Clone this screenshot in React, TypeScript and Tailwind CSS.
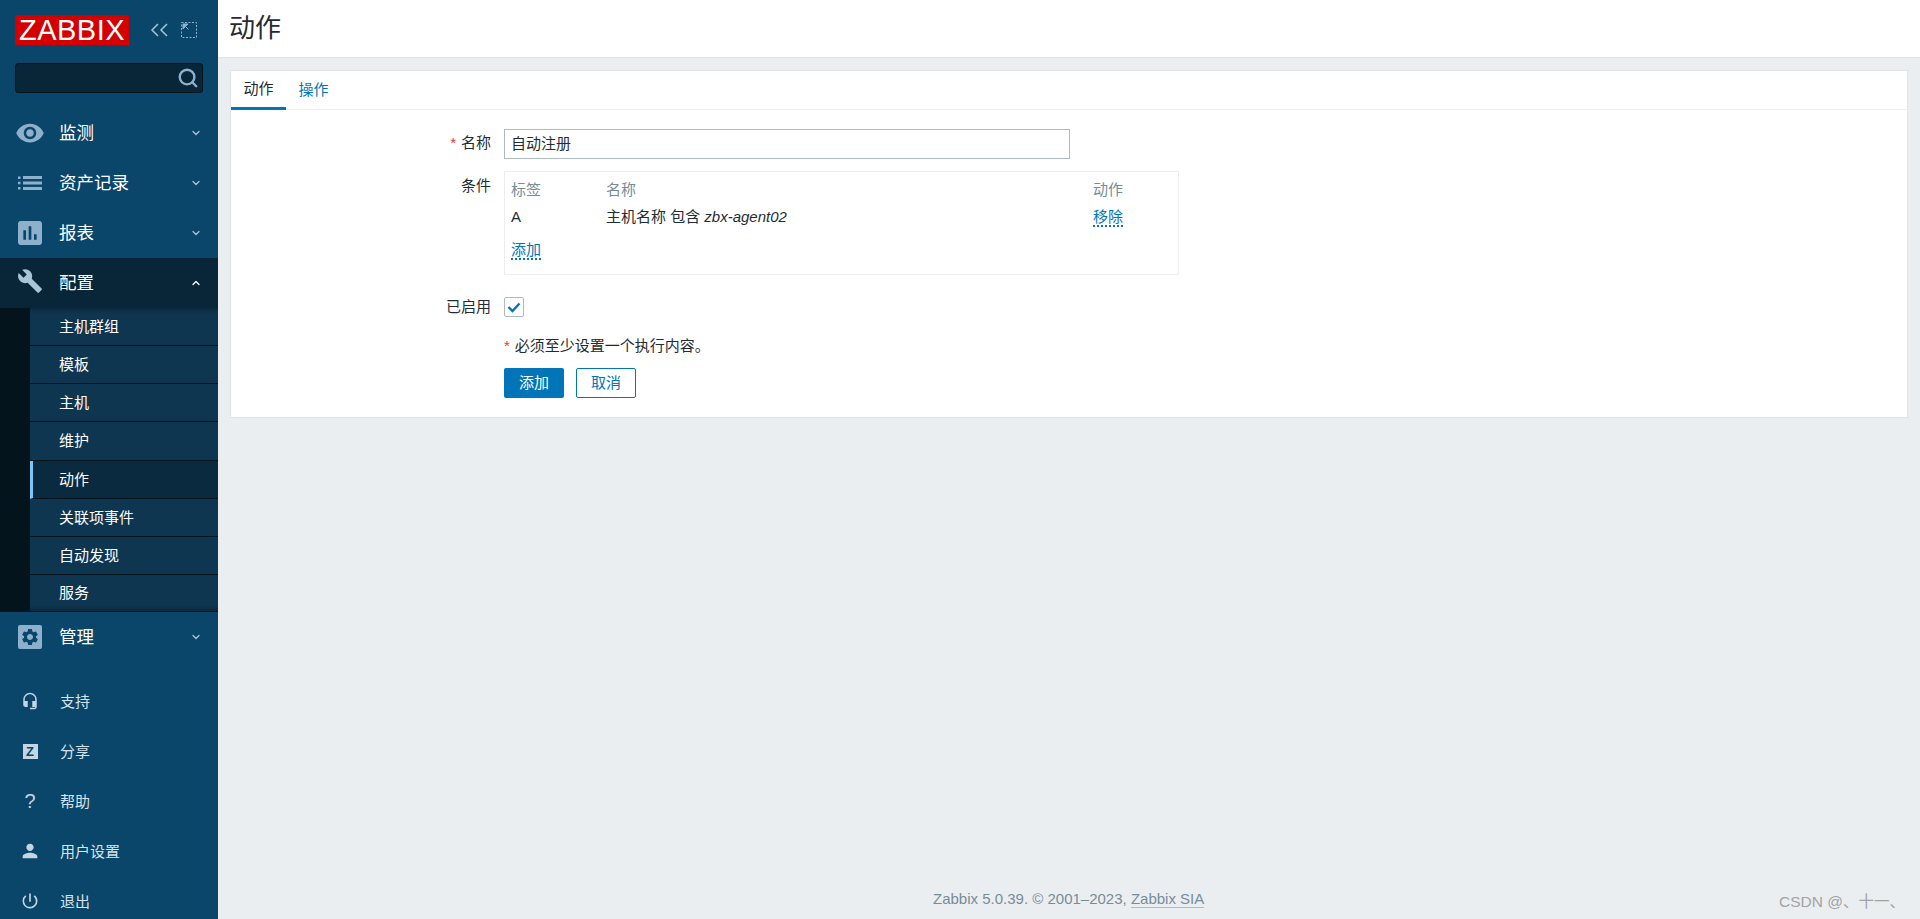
import React from "react";
import { MdVisibility, MdBuild, MdAssessment, MdPerson, MdPowerSettingsNew, MdSettings, MdHeadsetMic } from "react-icons/md";
import { ChevronDown, ChevronUp, Search } from "lucide-react";

const cjk = "font-['Liberation_Sans','Noto_Sans_CJK_SC',sans-serif]";

const ListIcon = () => (
  <svg width="24" height="14" viewBox="0 0 24 14" fill="#8db1cc">
    <rect x="0" y="0.5" width="2.5" height="2.5" />
    <rect x="0" y="5.75" width="2.5" height="2.5" />
    <rect x="0" y="11" width="2.5" height="2.5" />
    <rect x="5" y="0" width="19" height="3" />
    <rect x="5" y="5.5" width="19" height="3" />
    <rect x="5" y="11" width="19" height="3" />
  </svg>
);

const GearBox = () => (
  <span className="flex h-[24px] w-[24px] items-center justify-center rounded-[2px] bg-[#8db1cc]">
    <MdSettings size={20} color="#0a466a" />
  </span>
);

const CollapseIcon = () => (
  <svg width="18" height="14" viewBox="0 0 18 14" fill="none" stroke="#a9c4d8" strokeWidth="1.5">
    <path d="M8 1L2 7l6 6M17 1l-6 6 6 6" />
  </svg>
);

const KioskIcon = () => (
  <svg width="16" height="16" viewBox="0 0 16 16" fill="none" stroke="#8db1cc">
    <rect x="0.5" y="0.5" width="15" height="15" strokeDasharray="2 1.5" />
    <path d="M2 2l5.5 5.5M2 2h5L2 7z" fill="#8db1cc" stroke="#8db1cc" />
  </svg>
);

const MainItem = ({
  icon,
  label,
  open,
}: {
  icon: React.ReactNode;
  label: string;
  open?: boolean;
}) => (
  <div className={`flex h-[50px] items-center pr-[16px] ${open ? "bg-[#082638]" : ""}`}>
    <span className="flex w-[59px] shrink-0 items-center justify-center">{icon}</span>
    <span className="flex-1 text-[17.5px] text-white">{label}</span>
    {open ? (
      <ChevronUp size={12} color="#fff" strokeWidth={2.5} />
    ) : (
      <ChevronDown size={12} color="#a9c4d8" strokeWidth={2.5} />
    )}
  </div>
);

const subItems = [
  { label: "主机群组", cls: "h-[38px] bg-[#0f3651] pl-[29px] shadow-[inset_0_5px_5px_-3px_rgba(0,0,0,0.3)]" },
  { label: "模板", cls: "h-[38px] bg-[#0f3651] pl-[29px]" },
  { label: "主机", cls: "h-[38px] bg-[#0f3651] pl-[29px]" },
  { label: "维护", cls: "h-[39px] bg-[#0f3651] pl-[29px]" },
  { label: "动作", cls: "h-[38px] border-l-[3px] border-l-[#7fc4f5] bg-[#0a2a40] pl-[26px]" },
  { label: "关联项事件", cls: "h-[38px] bg-[#0f3651] pl-[29px]" },
  { label: "自动发现", cls: "h-[38px] bg-[#0f3651] pl-[29px]" },
  { label: "服务", cls: "h-[37px] bg-[#0f3651] pl-[29px] shadow-[inset_0_-5px_5px_-3px_rgba(0,0,0,0.3)]" },
];

const bottomItems: { icon: React.ReactNode; label: string }[] = [
  { icon: <MdHeadsetMic size={18} color="#c3d6e4" />, label: "支持" },
  {
    icon: (
      <span className="flex h-[15px] w-[15px] items-center justify-center bg-[#c3d6e4] text-[13px] font-bold leading-none text-[#0a466a]">
        Z
      </span>
    ),
    label: "分享",
  },
  { icon: <span className="text-[20px] text-[#c3d6e4]">?</span>, label: "帮助" },
  { icon: <MdPerson size={22} color="#c3d6e4" />, label: "用户设置" },
  { icon: <MdPowerSettingsNew size={20} color="#c3d6e4" />, label: "退出" },
];

const Sidebar = () => (
  <aside className="h-[919px] w-[218px] shrink-0 overflow-hidden bg-[#0a466a]">
    <div className="flex items-center px-[15px] pt-[15px]">
      <div className="flex h-[30px] w-[114px] items-center justify-center bg-[#d40000] text-[29px] leading-none tracking-[0.5px] text-white">
        ZABBIX
      </div>
      <span className="ml-[21px]">
        <CollapseIcon />
      </span>
      <span className="ml-[13px]">
        <KioskIcon />
      </span>
    </div>
    <div className="mx-[15px] mt-[18px] flex h-[30px] items-center justify-end rounded-[3px] border border-[#03141d] bg-[#082638] pr-[3px]">
      <Search size={22} color="#8db1cc" strokeWidth={2.6} />
    </div>
    <div className="mt-[15px]">
      <MainItem icon={<MdVisibility size={30} color="#8db1cc" />} label="监测" />
      <MainItem icon={<ListIcon />} label="资产记录" />
      <MainItem icon={<MdAssessment size={32} color="#8db1cc" />} label="报表" />
      <MainItem icon={<MdBuild size={26} color="#a9c4d8" className="-mt-[4px]" />} label="配置" open />
      <div className="flex h-[304px] bg-[#03141d]">
        <div className="w-[30px] shrink-0" />
        <div className="flex-1">
          {subItems.map((s) => (
            <div
              key={s.label}
              className={`flex items-center border-b border-b-[#03141d] pt-[1px] text-[15px] text-white ${s.cls}`}
            >
              {s.label}
            </div>
          ))}
        </div>
      </div>
      <MainItem icon={<GearBox />} label="管理" />
    </div>
    <div className="mt-[14px]">
      {bottomItems.map((b) => (
        <div key={b.label} className="flex h-[50px] items-center">
          <span className="flex w-[60px] shrink-0 items-center justify-center">{b.icon}</span>
          <span className="pt-[2px] text-[15px] text-[#d5e3ee]">{b.label}</span>
        </div>
      ))}
    </div>
  </aside>
);

const DottedLink = ({ children }: { children: React.ReactNode }) => (
  <span className="border-b-2 border-dotted border-[#0275b8] leading-[17px] text-[#0275b8]">{children}</span>
);

const Row = ({
  label,
  required,
  className,
  labelClass,
  children,
}: {
  label?: string;
  required?: boolean;
  className?: string;
  labelClass?: string;
  children: React.ReactNode;
}) => (
  <div className={`flex ${className ?? ""}`}>
    <div className={`w-[260px] shrink-0 text-right text-[#1f2c33] ${labelClass ?? "leading-[28px]"}`}>
      {required && <span className="mr-[5px] text-[#e33734]">*</span>}
      {label}
    </div>
    <div className="ml-[13px] flex-1">{children}</div>
  </div>
);

const Panel = () => (
  <div className="mx-[12px] mt-[12px] h-[348px] border border-[#dfe4e7] bg-white text-[15px]">
    <div className="flex h-[39px] border-b border-[#ebeef0]">
      <div className="-mb-[1px] flex h-[39px] w-[55px] items-center justify-center border-b-[3px] border-[#0275b8] text-[#1f2c33]">
        动作
      </div>
      <div className="flex w-[55px] items-center justify-center text-[#0275b8]">操作</div>
    </div>
    <div className="pt-[19px]">
      <Row label="名称" required>
        <div className="flex h-[30px] w-[566px] items-center border border-[#acbbc2] px-[6px] text-[#1f2c33]">
          自动注册
        </div>
      </Row>
      <Row label="条件" className="mt-[12px]" labelClass="leading-[30px]">
        <div className="h-[104px] w-[675px] border border-[#ebeef0] px-[6px] pt-[5px]">
          <div className="flex h-[27px] items-center text-[#768d99]">
            <span className="w-[95px]">标签</span>
            <span className="w-[487px]">名称</span>
            <span>动作</span>
          </div>
          <div className="flex h-[27px] items-center text-[#1f2c33]">
            <span className="w-[95px]">A</span>
            <span className="w-[487px]">
              主机名称 包含 <i>zbx-agent02</i>
            </span>
            <DottedLink>移除</DottedLink>
          </div>
          <div className="mt-[10px] flex">
            <DottedLink>添加</DottedLink>
          </div>
        </div>
      </Row>
      <Row label="已启用" className="mt-[22px]" labelClass="leading-[20px]">
        <div className="flex h-[20px] w-[20px] items-center justify-center rounded-[2px] border border-[#acbbc2]">
          <svg width="14" height="11" viewBox="0 0 14 11" fill="none" stroke="#0275b8" strokeWidth="2.4">
            <path d="M1.5 5l4 4 7-7.5" />
          </svg>
        </div>
      </Row>
      <Row className="mt-[19px]" labelClass="leading-[20px]">
        <div className="leading-[20px] text-[#1f2c33]">
          <span className="mr-[5px] text-[#e33734]">*</span>必须至少设置一个执行内容。
        </div>
      </Row>
      <Row className="mt-[12px]">
        <div className="flex gap-[12px]">
          <button className="h-[30px] w-[60px] rounded-[2px] bg-[#0275b8] text-white">添加</button>
          <button className="h-[30px] w-[60px] rounded-[2px] border border-[#0275b8] bg-white text-[#0275b8]">
            取消
          </button>
        </div>
      </Row>
    </div>
  </div>
);

export default function App() {
  return (
    <div className={`flex h-[919px] overflow-hidden bg-[#ebeef0] ${cjk}`}>
      <Sidebar />
      <main className="flex min-w-0 flex-1 flex-col">
        <header className="flex h-[58px] shrink-0 items-center border-b border-[#dfe4e7] bg-white pl-[11px] text-[26px] text-[#1f2c33]">
          动作
        </header>
        <Panel />
        <footer className="mt-auto flex h-[31px] items-start pl-[715px] text-[15px] text-[#768d99]">
          <span>
            Zabbix 5.0.39. © 2001–2023, <span className="border-b border-[#acbbc2]">Zabbix SIA</span>
          </span>
          <span className="ml-auto mr-[15px] mt-[2px] text-[15.5px] text-[#a3a3a3]">CSDN @、十一、</span>
        </footer>
      </main>
    </div>
  );
}
